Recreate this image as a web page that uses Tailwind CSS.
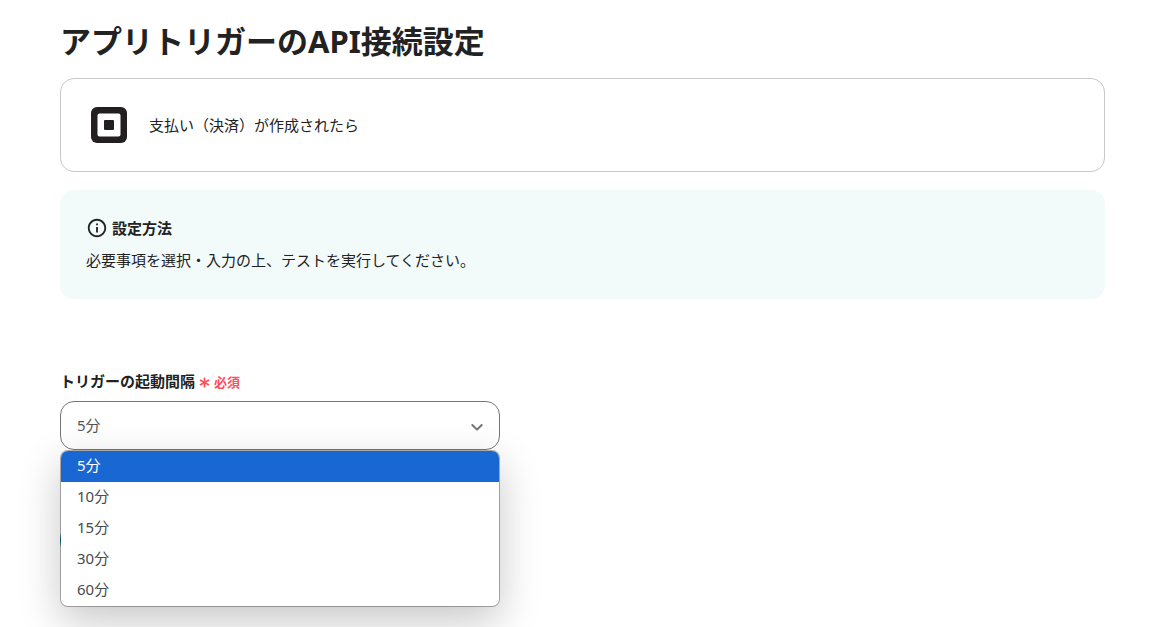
<!DOCTYPE html>
<html lang="ja">
<head>
<meta charset="utf-8">
<meta name="viewport" content="width=device-width, initial-scale=1">
<title>アプリトリガーのAPI接続設定</title>
<script src="https://cdn.jsdelivr.net/npm/@tailwindcss/browser@4"></script>
</head>
<body class="min-h-screen bg-white font-['Noto_Sans','Noto_Sans_CJK_JP',sans-serif] text-[15px] leading-6 text-[#222222]">
<main class="pt-5 pr-12 pl-[60px]">
  <h1 class="text-[31px] leading-[42px] font-bold">アプリトリガーのAPI接続設定</h1>

  <section class="mt-4 flex items-center gap-[22px] rounded-[14px] border border-[#c8c8c8] px-[30px] py-7">
    <svg class="size-9 shrink-0" viewBox="0 0 36 36" aria-hidden="true">
      <rect width="36" height="36" rx="6" fill="#231f20"/>
      <rect x="6.5" y="6.5" width="23" height="23" rx="2" fill="#fff"/>
      <rect x="13" y="13" width="10" height="10" rx="1" fill="#231f20"/>
    </svg>
    <p>支払い（決済）が作成されたら</p>
  </section>

  <section class="mt-[18px] rounded-[14px] bg-[#f2fafa] px-[26px] pt-[26px] pb-[27px]">
    <h2 class="flex items-center gap-1 font-bold">
      <svg class="size-[22px]" viewBox="0 0 24 24" fill="#222" aria-hidden="true">
        <path d="M11 7h2v2h-2zm0 4h2v6h-2zm1-9C6.48 2 2 6.48 2 12s4.48 10 10 10 10-4.48 10-10S17.52 2 12 2zm0 18c-4.41 0-8-3.59-8-8s3.59-8 8-8 8 3.59 8 8-3.59 8-8 8z"/>
      </svg>
      設定方法
    </h2>
    <p class="mt-2">必要事項を選択・入力の上、テストを実行してください。</p>
  </section>

  <section class="mt-[70px]">
    <label for="interval" class="flex items-center gap-1 font-bold">
      トリガーの起動間隔
      <span class="flex items-center gap-1 pt-[2px] text-[13px] leading-[22px] text-[#ff4d5e]">
        <svg class="size-[11px]" viewBox="0 0 11 11" fill="none" stroke="#ff4d5e" stroke-width="1.7" aria-hidden="true">
          <path d="M5.5 0.5v10M1 3l9 5M10 3l-9 5"/>
        </svg>
        必須
      </span>
    </label>
    <div class="relative mt-2 w-[440px] max-w-full">
      <select id="interval" class="block h-[49px] w-full appearance-none rounded-[14px] border border-[#757575] bg-white px-4 pb-[2px] text-[#555555]">
        <option selected>5分</option>
        <option>10分</option>
        <option>15分</option>
        <option>30分</option>
        <option>60分</option>
      </select>
      <svg class="pointer-events-none absolute top-5 right-4 h-3 w-[14px]" viewBox="0 0 14 12" fill="none" stroke="#757575" stroke-width="2" stroke-linecap="round" stroke-linejoin="round" aria-hidden="true">
        <path d="M2.3 4 7 8.6 11.7 4"/>
      </svg>
      <ul role="listbox" aria-labelledby="interval" class="absolute top-full left-0 z-10 w-full overflow-hidden rounded-lg border border-black/30 bg-white bg-clip-padding text-[#4a4a4a] shadow-[0_14px_40px_rgba(0,0,0,0.22)]">
        <li role="option" aria-selected="true" class="bg-[#1967d2] px-4 pb-[2px] leading-[29px] text-white">5分</li>
        <li role="option" aria-selected="false" class="px-4 pb-[2px] leading-[29px]">10分</li>
        <li role="option" aria-selected="false" class="px-4 pb-[2px] leading-[29px]">15分</li>
        <li role="option" aria-selected="false" class="px-4 pb-[2px] leading-[29px]">30分</li>
        <li role="option" aria-selected="false" class="px-4 pb-[2px] leading-[29px]">60分</li>
      </ul>
    </div>
    <div class="mt-[66px] h-12 w-40 rounded-full bg-[#0b7a94]"></div>
  </section>
</main>
</body>
</html>
